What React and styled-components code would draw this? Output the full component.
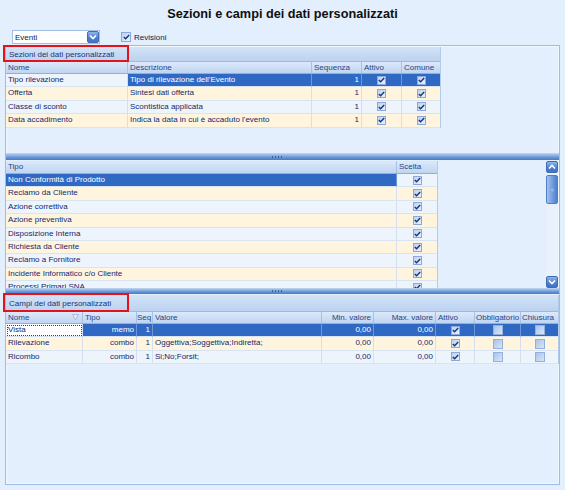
import styled, { createGlobalStyle } from "styled-components";

const GlobalStyle = createGlobalStyle`
	html, body {
		margin: 0;
		padding: 0;
		background: #e3effd;
		font-family: "Liberation Sans", Arial, sans-serif;
		overflow: hidden;
	}
	* {
		box-sizing: border-box;
	}
`;

const Page = styled.div`
	width: 565px;
	height: 490px;
	background: #e3effd;
	display: flex;
	flex-direction: column;
`;

const Title = styled.h1`
	margin: 0;
	height: 29px;
	line-height: 29px;
	text-align: center;
	font-size: 12.7px;
	font-weight: bold;
	color: #101010;
`;

const Toolbar = styled.div`
	height: 16px;
	display: flex;
	align-items: center;
	padding-left: 12px;
	gap: 21px;
`;

const Combo = styled.div`
	width: 88px;
	height: 14px;
	background: #fff;
	border: 1px solid #a3bfe6;
	display: flex;
	align-items: center;
	justify-content: space-between;
	font-size: 8px;
	color: #10204a;
	padding-left: 2px;
`;

const BlueButton = styled.span`
	width: 12px;
	height: 12px;
	border-radius: 2px;
	background: linear-gradient(#8fb4ea, #4f83d2 55%, #3f72c2);
	border: 1px solid #3f6db5;
	display: flex;
	align-items: center;
	justify-content: center;
`;

const CheckLabel = styled.label`
	display: flex;
	align-items: center;
	gap: 3px;
	font-size: 8px;
	color: #10204a;
`;

const Box = styled.span`
	width: ${(props) => props.$size || 10}px;
	height: ${(props) => props.$size || 10}px;
	display: inline-flex;
	align-items: center;
	justify-content: center;
	border: 1px solid ${(props) => (props.$empty ? "#94b0dc" : "#8aa8d8")};
	background: ${(props) =>
		props.$empty
			? "linear-gradient(135deg, #a9c3ea, #d9e6f8)"
			: "linear-gradient(135deg, #bcd2f1, #e9f1fc)"};
`;

const Panel = styled.div`
	margin-left: 5px;
	width: 555px;
	height: 440px;
	border: 1px solid #9dbde6;
	box-shadow: inset 0 0 0 1px #f1f7ff;
	display: flex;
	flex-direction: column;
`;

const Section = styled.div`
	position: relative;
	height: ${(props) => props.$h}px;
	padding-top: 1px;
	display: flex;
	justify-content: space-between;
	overflow: visible;
`;

const Clip = styled.div`
	overflow: hidden;
	height: 100%;
`;

const Grid = styled.div`
	width: ${(props) => props.$w}px;
	border-right: 1px solid #b4cbea;
	align-self: flex-start;
	font-size: 8px;
`;

const GroupBar = styled.div`
	height: ${(props) => props.$h || 15}px;
	line-height: ${(props) => props.$h || 15}px;
	padding-left: 3px;
	color: #15357a;
	background: linear-gradient(#d3e3f7, #bcd2f1);
	border-bottom: 1px solid #9cbbe4;
`;

const HeaderRow = styled.div`
	display: grid;
	grid-template-columns: ${(props) => props.$cols};
	height: ${(props) => props.$h || 12}px;
	background: linear-gradient(#dce9fa, #bfd5f2);
	border-bottom: 1px solid #8fb0df;
`;

const HeaderCell = styled.div`
	position: relative;
	padding: 0 ${(props) => props.$pad ?? 2}px;
	line-height: ${(props) => props.$h || 11}px;
	color: #2a4583;
	white-space: nowrap;
	overflow: hidden;
	text-align: ${(props) => props.$align || "left"};
	border-right: 1px solid #a6c1e6;
	&:last-child {
		border-right: none;
	}
`;

const rowBg = {
	light: "#eef4fc",
	cream: "#fff5df",
	sel: "#2f69c4",
	white: "#ffffff",
};

const Row = styled.div`
	display: grid;
	grid-template-columns: ${(props) => props.$cols};
	height: 13.4px;
`;

const Cell = styled.div`
	padding: 0 2px;
	line-height: 12.4px;
	white-space: nowrap;
	overflow: hidden;
	display: flex;
	align-items: center;
	justify-content: ${(props) =>
		props.$align === "right" ? "flex-end" : props.$align === "center" ? "center" : "flex-start"};
	background: ${(props) => rowBg[props.$bg]};
	color: ${(props) => (props.$bg === "sel" ? "#ffffff" : "#14286a")};
	border-right: 1px solid ${(props) => (props.$bg === "sel" ? "#6e95d4" : "#d4e0f0")};
	border-bottom: 1px solid #d9e4f2;
	outline: ${(props) => (props.$focus ? "1px dotted #30406a" : "none")};
	outline-offset: -2px;
	&:last-child {
		border-right: none;
	}
`;

const Splitter = styled.div`
	height: ${(props) => props.$h || 7}px;
	flex-shrink: 0;
	background: linear-gradient(#c3d7f2, #8fb2e3 35%, #5f8ed3 70%, #4c7bc4);
	display: flex;
	align-items: center;
	justify-content: center;
`;

const Grip = styled.span`
	width: 11px;
	height: 2px;
	background: repeating-linear-gradient(90deg, #3b629f 0 1px, transparent 1px 3px);
	margin-left: -10px;
`;

const Scrollbar = styled.div`
	width: 12px;
	height: 127px;
	margin-right: 1px;
	background: #e9f1fc;
	display: flex;
	flex-direction: column;
	justify-content: space-between;
`;

const Thumb = styled.div`
	margin-top: 2px;
	height: 29px;
	border-radius: 2px;
	border: 1px solid #4f7fc5;
	background: linear-gradient(90deg, #a3c2ee, #6d99dc 60%, #4e80cc);
	display: flex;
	align-items: center;
	justify-content: center;
`;

const ThumbGrip = styled.span`
	width: 4px;
	height: 4px;
	background: #9cbbe8;
	border: 1px solid #7ea3de;
`;

const Track = styled.div`
	flex: 1;
	display: flex;
	flex-direction: column;
`;

const Highlight = styled.div`
	position: absolute;
	left: -3px;
	top: ${(props) => props.$top}px;
	width: 126px;
	height: ${(props) => props.$h}px;
	border: 2px solid #e3131c;
	pointer-events: none;
`;

const Funnel = styled.svg`
	position: absolute;
	right: 3px;
	top: 2px;
`;

const Chevron = ({ up }) => (
	<svg width="8" height="6" viewBox="0 0 8 6">
		<path
			d={up ? "M1 4.5 L4 1.5 L7 4.5" : "M1 1.5 L4 4.5 L7 1.5"}
			stroke="#ffffff"
			strokeWidth="1.6"
			fill="none"
		/>
	</svg>
);

const Check = ({ checked, size }) => (
	<Box $size={size} $empty={!checked}>
		{checked && (
			<svg width="7" height="6" viewBox="0 0 7 6">
				<path d="M0.8 3 L2.6 4.8 L6.2 1" stroke="#1a357c" strokeWidth="1.4" fill="none" />
			</svg>
		)}
	</Box>
);

const sezioni = [
	{ nome: "Tipo rilevazione", desc: "Tipo di rilevazione dell'Evento" },
	{ nome: "Offerta", desc: "Sintesi dati offerta" },
	{ nome: "Classe di sconto", desc: "Scontistica applicata" },
	{ nome: "Data accadimento", desc: "Indica la data in cui è accaduto l'evento" },
];

const tipi = [
	"Non Conformità di Prodotto",
	"Reclamo da Cliente",
	"Azione correttiva",
	"Azione preventiva",
	"Disposizione Interna",
	"Richiesta da Cliente",
	"Reclamo a Fornitore",
	"Incidente Informatico c/o Cliente",
	"Processi Primari SNA",
];

const campi = [
	{ nome: "Vista", tipo: "memo", valore: "" },
	{ nome: "Rilevazione", tipo: "combo", valore: "Oggettiva;Soggettiva;Indiretta;" },
	{ nome: "Ricombo", tipo: "combo", valore: "Si;No;Forsit;" },
];

const COLS1 = "122px 184px 50px 40px 38px";
const COLS2 = "391px 40px";
const COLS3 = "77px 54px 16px 169px 52px 62px 39px 46px 37px";

const stripe = (i) => (i % 2 === 0 ? "light" : "cream");

const App = () => {
	return (
		<Page>
			<GlobalStyle />
			<Title>Sezioni e campi dei dati personalizzati</Title>
			<Toolbar>
				<Combo>
					Eventi
					<BlueButton>
						<Chevron />
					</BlueButton>
				</Combo>
				<CheckLabel>
					<Check checked />
					Revisioni
				</CheckLabel>
			</Toolbar>
			<Panel>
				<Section $h={107}>
					<Grid $w={435}>
						<GroupBar>Sezioni dei dati personalizzati</GroupBar>
						<HeaderRow $cols={COLS1}>
							<HeaderCell>Nome</HeaderCell>
							<HeaderCell>Descrizione</HeaderCell>
							<HeaderCell>Sequenza</HeaderCell>
							<HeaderCell>Attivo</HeaderCell>
							<HeaderCell>Comune</HeaderCell>
						</HeaderRow>
						{sezioni.map((s, i) => {
							const bg = i === 0 ? "sel" : stripe(i);
							return (
								<Row key={s.nome} $cols={COLS1}>
									<Cell $bg={stripe(i)}>{s.nome}</Cell>
									<Cell $bg={bg}>{s.desc}</Cell>
									<Cell $bg={bg} $align="right">1</Cell>
									<Cell $bg={bg} $align="center">
										<Check checked size={9} />
									</Cell>
									<Cell $bg={bg} $align="center">
										<Check checked size={9} />
									</Cell>
								</Row>
							);
						})}
					</Grid>
					<Highlight $top={-1} $h={17} />
				</Section>
				<Splitter>
					<Grip />
				</Splitter>
				<Section $h={128}>
					<Clip>
						<Grid $w={432}>
							<HeaderRow $cols={COLS2} $h={13}>
								<HeaderCell $h={12}>Tipo</HeaderCell>
								<HeaderCell $h={12}>Scelta</HeaderCell>
							</HeaderRow>
							{tipi.map((t, i) => (
								<Row key={t} $cols={COLS2}>
									<Cell $bg={i === 0 ? "sel" : stripe(i)}>{t}</Cell>
									<Cell $bg={stripe(i)} $align="center">
										<Check checked size={9} />
									</Cell>
								</Row>
							))}
						</Grid>
					</Clip>
					<Scrollbar>
						<BlueButton>
							<Chevron up />
						</BlueButton>
						<Track>
							<Thumb>
								<ThumbGrip />
							</Thumb>
						</Track>
						<BlueButton>
							<Chevron />
						</BlueButton>
					</Scrollbar>
				</Section>
				<Splitter $h={6}>
					<Grip />
				</Splitter>
				<Section $h={190}>
					<Grid $w={553}>
						<GroupBar $h={17}>Campi dei dati personalizzati</GroupBar>
						<HeaderRow $cols={COLS3}>
							<HeaderCell>
								Nome
								<Funnel width="7" height="7" viewBox="0 0 7 7">
									<path d="M0.5 0.5 H6.5 L3.5 6 Z" fill="#e4edf9" stroke="#9fb4d6" strokeWidth="0.8" />
								</Funnel>
							</HeaderCell>
							<HeaderCell>Tipo</HeaderCell>
							<HeaderCell $pad={0}>Seq</HeaderCell>
							<HeaderCell>Valore</HeaderCell>
							<HeaderCell $align="right">Min. valore</HeaderCell>
							<HeaderCell $align="right">Max. valore</HeaderCell>
							<HeaderCell>Attivo</HeaderCell>
							<HeaderCell $pad={1}>Obbligatorio</HeaderCell>
							<HeaderCell $pad={1}>Chiusura</HeaderCell>
						</HeaderRow>
						{campi.map((c, i) => {
							const bg = i === 0 ? "sel" : stripe(i);
							return (
								<Row key={c.nome} $cols={COLS3}>
									<Cell $bg={i === 0 ? "white" : stripe(i)} $focus={i === 0}>
										{c.nome}
									</Cell>
									<Cell $bg={bg} $align="right">{c.tipo}</Cell>
									<Cell $bg={bg} $align="right">1</Cell>
									<Cell $bg={bg}>{c.valore}</Cell>
									<Cell $bg={bg} $align="right">0,00</Cell>
									<Cell $bg={bg} $align="right">0,00</Cell>
									<Cell $bg={bg} $align="center">
										<Check checked size={9} />
									</Cell>
									<Cell $bg={bg} $align="center">
										<Check size={10} />
									</Cell>
									<Cell $bg={bg} $align="center">
										<Check size={10} />
									</Cell>
								</Row>
							);
						})}
					</Grid>
					<Highlight $top={-1} $h={19} />
				</Section>
			</Panel>
		</Page>
	);
};

export default App;
